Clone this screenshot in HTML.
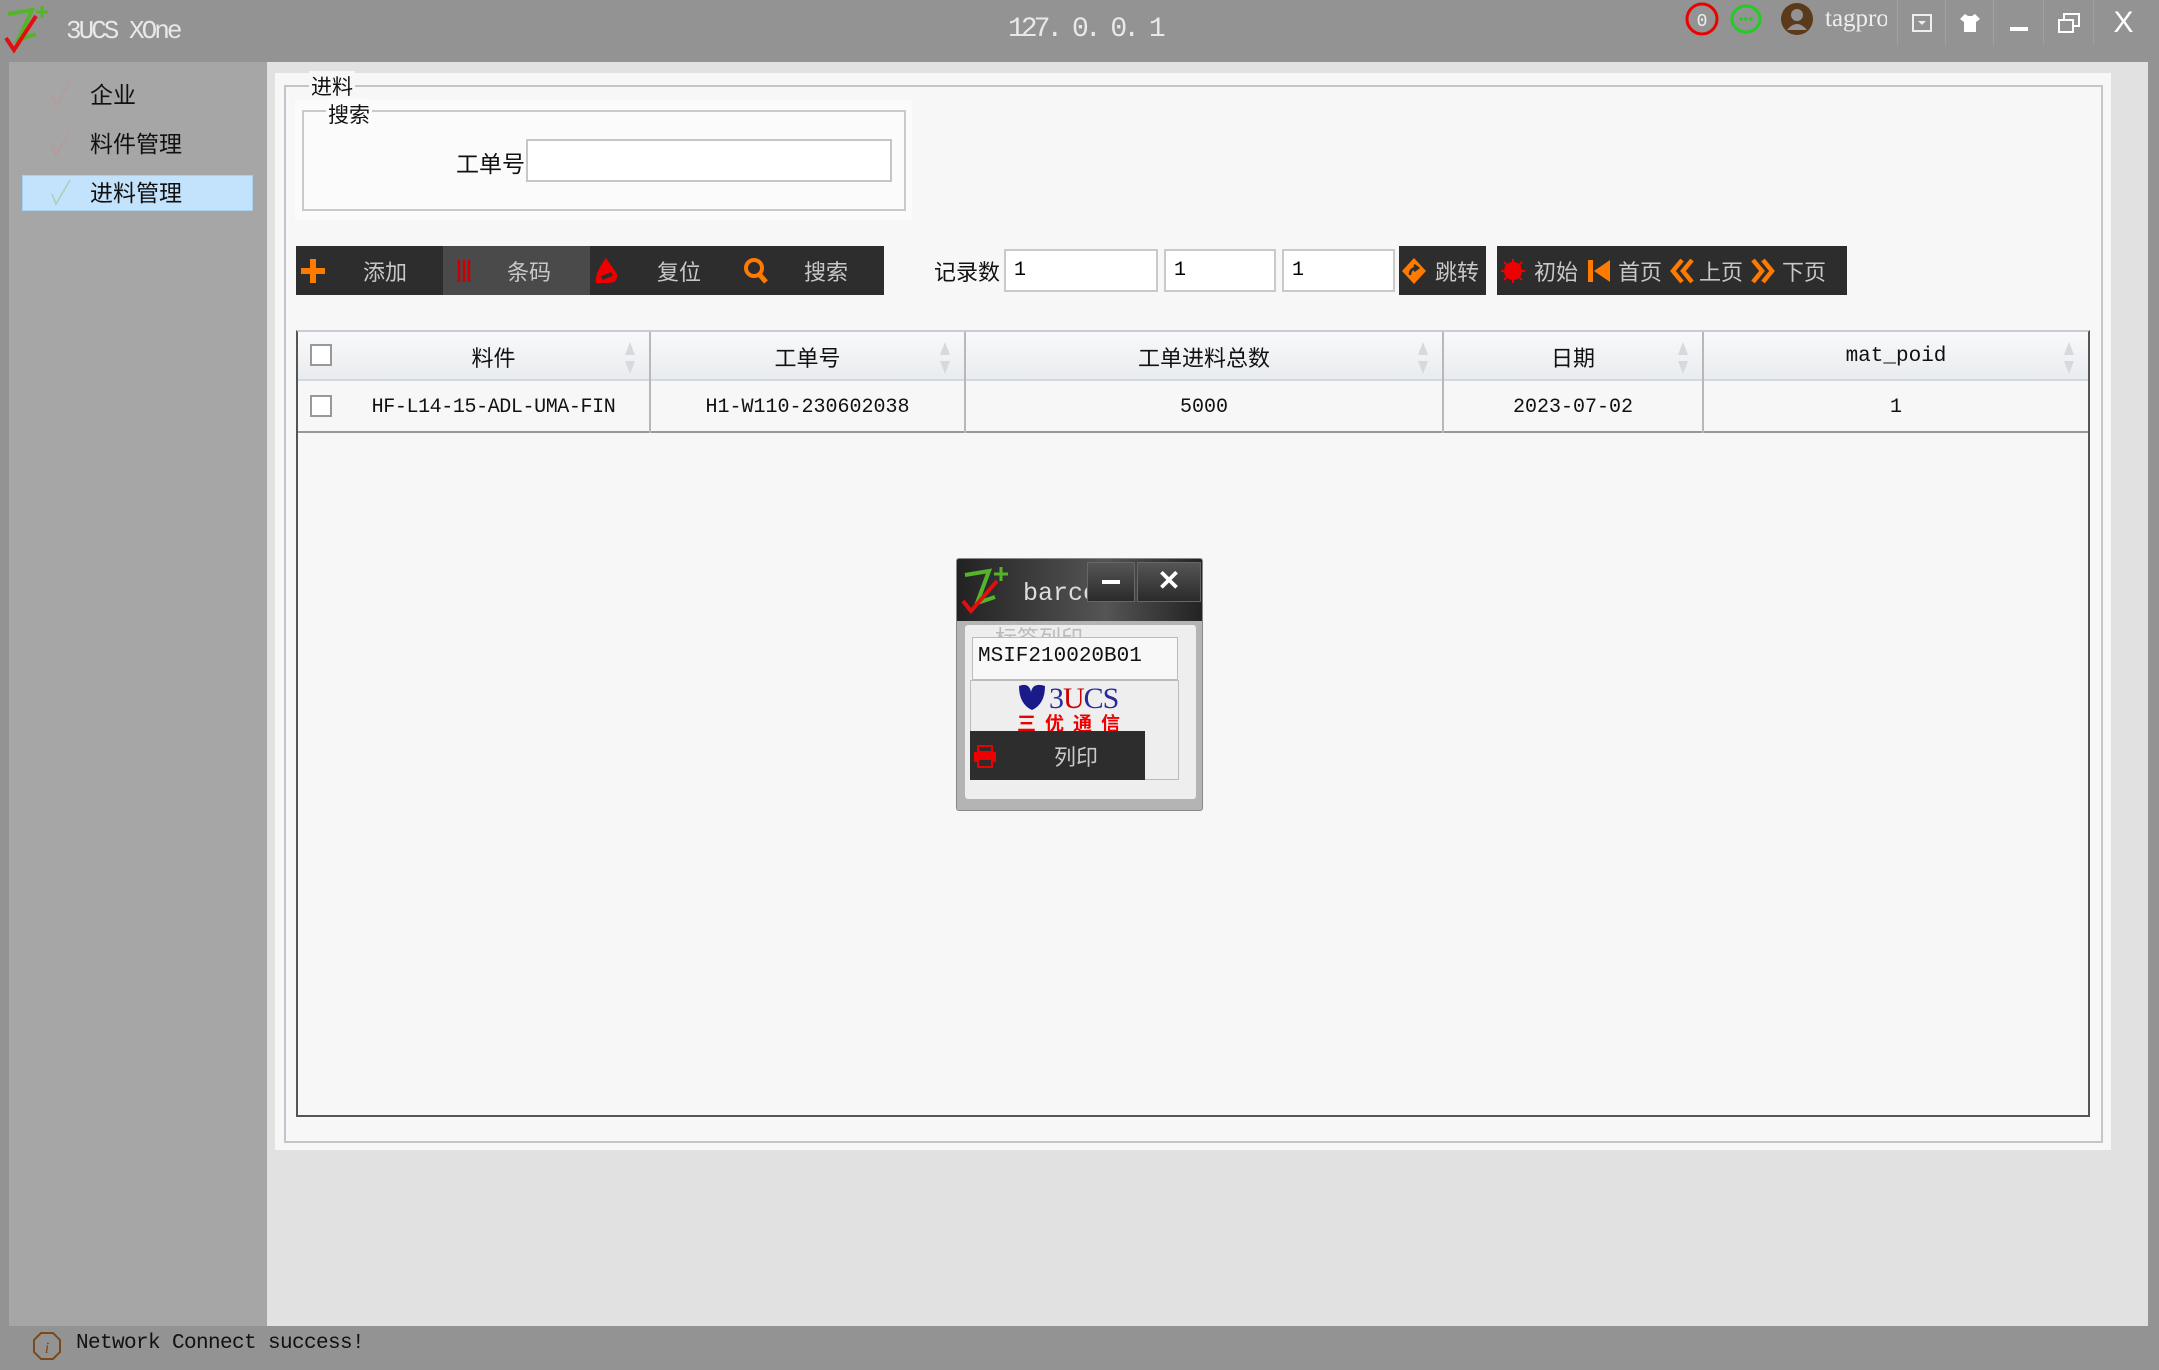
<!DOCTYPE html>
<html><head><meta charset="utf-8"><style>
*{margin:0;padding:0;box-sizing:border-box}
body{width:2159px;height:1370px;overflow:hidden;background:#939393;font-family:"Liberation Sans","Noto Sans CJK SC",sans-serif;position:relative}
.a{position:absolute}
.cn{font-family:"Liberation Sans","Noto Sans CJK SC",sans-serif}
.mono{font-family:"Liberation Mono","Noto Sans CJK SC",monospace}
.tb{background:#2d2d2d;color:#c8c8c8;font-size:22px;display:flex;align-items:center}
.inp{background:#fff;border:2px solid #c9c9c9;font-family:"Liberation Mono",monospace;font-size:20px;padding-left:8px;display:flex;align-items:center}
.th{top:0;height:49px;display:flex;align-items:center;justify-content:center;font-size:22px;color:#111}
.td{top:49px;height:52px;display:flex;align-items:center;justify-content:center;font-size:20px;color:#111}
.vl{width:2px;background:#b8b8b8;top:0;height:101px}
.sort{width:12px;height:36px}
</style></head><body>
<svg class="a" style="left:2px;top:4px" width="52" height="50" viewBox="0 0 52 50"><path d="M6 10 L30 6 L16 36 L34 30" stroke="#55b52a" stroke-width="4" fill="none"/><path d="M4 34 L12 46 L34 12" stroke="#e01010" stroke-width="4" fill="none"/><path d="M40 2v12M34 8h12" stroke="#55b52a" stroke-width="3"/></svg>
<div class="a mono" style="left:66px;top:16px;font-size:26px;color:#e8e8e8;letter-spacing:-3px">3UCS XOne</div>
<div class="a mono" style="left:1008px;top:14px;font-size:28px;color:#e8e8e8;letter-spacing:-4px">127. 0. 0. 1</div>
<svg class="a" style="left:1684px;top:2px" width="36" height="36"><ellipse cx="18" cy="17" rx="15" ry="15" stroke="#e00" stroke-width="3" fill="none"/><text x="18" y="24" font-size="18" fill="#eee" text-anchor="middle" font-family="Liberation Mono">0</text></svg>
<svg class="a" style="left:1728px;top:2px" width="36" height="36"><ellipse cx="18" cy="17" rx="14" ry="13" stroke="#2c2" stroke-width="3" fill="none"/><circle cx="13" cy="17" r="1.8" fill="#2c2"/><circle cx="18" cy="17" r="1.8" fill="#2c2"/><circle cx="23" cy="17" r="1.8" fill="#2c2"/></svg>
<svg class="a" style="left:1780px;top:2px" width="34" height="34"><circle cx="17" cy="17" r="16" fill="#5a3a1a"/><circle cx="17" cy="13" r="6" fill="#939393"/><path d="M7 28 Q17 16 27 28" fill="#939393"/></svg>
<div class="a" style="left:1825px;top:5px;font-family:'Liberation Serif',serif;font-size:25px;color:#eee;width:62px;overflow:hidden;white-space:nowrap">tagpro</div>
<div class="a" style="left:1897px;top:0;width:262px;height:45px;display:flex">
<div style="width:48px;border-left:1px solid #a0a0a0;display:flex;align-items:center;justify-content:center"><svg width="20" height="18"><rect x="1" y="1" width="18" height="16" stroke="#eee" stroke-width="2" fill="none"/><path d="M6 7h8l-4 4z" fill="#eee"/></svg></div>
<div style="width:48px;border-left:1px solid #a0a0a0;display:flex;align-items:center;justify-content:center"><svg width="22" height="20"><path d="M6 1 L1 6 L5 9 L5 19 L17 19 L17 9 L21 6 L16 1 L13 3 L9 3Z" fill="#fff"/></svg></div>
<div style="width:50px;border-left:1px solid #a0a0a0;display:flex;align-items:center;justify-content:center"><div style="width:18px;height:4px;background:#fff;margin-top:12px"></div></div>
<div style="width:50px;border-left:1px solid #a0a0a0;display:flex;align-items:center;justify-content:center"><svg width="22" height="20"><rect x="1" y="7" width="14" height="12" stroke="#fff" stroke-width="2" fill="none"/><path d="M6 6V1h15v12h-5" stroke="#fff" stroke-width="2" fill="none"/></svg></div>
<div style="width:60px;border-left:1px solid #a0a0a0;display:flex;align-items:center;justify-content:center;color:#fff;font-size:30px;font-family:'Liberation Sans'">X</div>
</div>
<div class="a" style="left:9px;top:62px;width:258px;height:1264px;background:#a6a6a6"></div>
<div class="a" style="left:22px;top:175px;width:231px;height:36px;background:#c3e2fb;border:1px solid #a8d0f0"></div>
<div class="a cn" style="left:90px;top:76px;font-size:23px;color:#111">企业</div>
<div class="a cn" style="left:90px;top:125px;font-size:23px;color:#111">料件管理</div>
<div class="a cn" style="left:90px;top:174px;font-size:23px;color:#111">进料管理</div>
<svg class="a" style="left:50px;top:80px" width="22" height="28"><path d="M2 16 L6 26 L20 2" stroke="#c98f8f" stroke-width="1.5" fill="none" opacity=".6"/></svg>
<svg class="a" style="left:50px;top:129px" width="22" height="28"><path d="M2 16 L6 26 L20 2" stroke="#c98f8f" stroke-width="1.5" fill="none" opacity=".6"/></svg>
<svg class="a" style="left:50px;top:178px" width="22" height="28"><path d="M2 16 L6 26 L20 2" stroke="#9ac8a0" stroke-width="1.5" fill="none" opacity=".7"/></svg>
<div class="a" style="left:267px;top:62px;width:1881px;height:1264px;background:#e1e1e1"></div>
<div class="a" style="left:275px;top:73px;width:1836px;height:1077px;background:#f7f7f7"></div>
<div class="a" style="left:284px;top:85px;width:1819px;height:1058px;border:2px solid #c2c6cc"></div>
<div class="a cn" style="left:309px;top:71px;font-size:21px;color:#111;background:#f7f7f7;padding:0 2px">进料</div>
<div class="a" style="left:295px;top:100px;width:617px;height:120px;background:#fbfbfb"></div>
<div class="a" style="left:302px;top:110px;width:604px;height:101px;border:2px solid #c8cacc"></div>
<div class="a cn" style="left:326px;top:99px;font-size:21px;color:#111;background:#fbfbfb;padding:0 2px">搜索</div>
<div class="a cn" style="left:456px;top:145px;font-size:23px;color:#111">工单号</div>
<div class="a" style="left:526px;top:139px;width:366px;height:43px;background:#fff;border:2px solid #c4c6c8"></div>
<div class="a" style="left:296px;top:246px;width:588px;height:49px;display:flex">
<div class="tb" style="width:147px"><svg width="30" height="30" style="margin-left:2px"><path d="M15 3v24M3 15h24" stroke="#ff7a00" stroke-width="6"/></svg><span style="margin-left:35px">添加</span></div>
<div class="tb" style="width:147px;background:#4a4a4a"><svg width="30" height="30" style="margin-left:12px"><path d="M4 4v22M9 4v22M14 4v22" stroke="#c00" stroke-width="2.5"/></svg><span style="margin-left:22px">条码</span></div>
<div class="tb" style="width:147px"><svg width="30" height="30" style="margin-left:2px"><path d="M14 2 L25 18 Q26 27 16 27 L4 27 Q2 18 14 2Z" fill="#e00"/><path d="M10 22 L20 18" stroke="#2d2d2d" stroke-width="4"/></svg><span style="margin-left:35px">复位</span></div>
<div class="tb" style="width:147px"><svg width="30" height="30" style="margin-left:4px"><circle cx="13" cy="12" r="8" stroke="#ff7a00" stroke-width="4" fill="none"/><path d="M18 18 L25 26" stroke="#ff7a00" stroke-width="5"/></svg><span style="margin-left:33px">搜索</span></div>
</div>
<div class="a cn" style="left:934px;top:255px;font-size:22px;color:#111">记录数</div>
<div class="a inp" style="left:1004px;top:249px;width:154px;height:43px">1</div>
<div class="a inp" style="left:1164px;top:249px;width:112px;height:43px">1</div>
<div class="a inp" style="left:1282px;top:249px;width:113px;height:43px">1</div>
<div class="a tb" style="left:1399px;top:246px;width:87px;height:49px"><svg width="28" height="30" style="margin-left:2px"><path d="M13 2 L25 15 L13 28 L1 15Z" fill="#ff7a00"/><path d="M9 19 Q9 12 16 12 M13 9 L17 12 L13 15" stroke="#2d2d2d" stroke-width="2.5" fill="none"/></svg><span style="margin-left:6px">跳转</span></div>
<div class="a tb" style="left:1497px;top:246px;width:350px;height:49px">
<svg width="26" height="26" style="margin-left:3px"><circle cx="13" cy="13" r="9" fill="#e00"/><path d="M13 1v24M1 13h24M4 4l18 18M22 4L4 22" stroke="#e00" stroke-width="2"/></svg><span style="margin-left:8px">初始</span>
<svg width="28" height="28" style="margin-left:8px"><rect x="2" y="3" width="5" height="22" fill="#ff7a00"/><path d="M24 3 L8 14 L24 25Z" fill="#ff7a00"/></svg><span style="margin-left:4px">首页</span>
<svg width="28" height="28" style="margin-left:6px"><path d="M14 3 L5 14 L14 25 M24 3 L15 14 L24 25" stroke="#ff7a00" stroke-width="4.5" fill="none"/></svg><span style="margin-left:3px">上页</span>
<svg width="28" height="28" style="margin-left:6px"><path d="M4 3 L13 14 L4 25 M14 3 L23 14 L14 25" stroke="#ff7a00" stroke-width="4.5" fill="none"/></svg><span style="margin-left:5px">下页</span>
</div>
<div class="a" style="left:296px;top:330px;width:1794px;height:787px;border:2px solid #555;border-top:2px solid #c8ccd0;background:#f7f7f7">
<div class="a" style="left:0;top:0;width:1790px;height:49px;background:linear-gradient(#f8f9fa,#e9ecef);border-bottom:2px solid #d2d8de"></div>
<div class="a" style="left:0;top:49px;width:1790px;height:52px;background:#f7f7f7;border-bottom:2px solid #999"></div>
<div class="a" style="left:12px;top:12px;width:22px;height:22px;border:2px solid #999;background:#fff"></div>
<div class="a" style="left:12px;top:63px;width:22px;height:22px;border:2px solid #999;background:#fff"></div>
<div class="a vl" style="left:351px"></div><div class="a vl" style="left:666px"></div><div class="a vl" style="left:1144px"></div><div class="a vl" style="left:1404px"></div>
<div class="a th cn" style="left:40px;width:311px">料件</div>
<div class="a th cn" style="left:353px;width:313px">工单号</div>
<div class="a th cn" style="left:668px;width:476px">工单进料总数</div>
<div class="a th cn" style="left:1146px;width:258px">日期</div>
<div class="a th mono" style="left:1406px;width:384px;font-size:21px">mat_poid</div>
<div class="a td mono" style="left:40px;width:311px;letter-spacing:-0.4px">HF-L14-15-ADL-UMA-FIN</div>
<div class="a td mono" style="left:353px;width:313px">H1-W110-230602038</div>
<div class="a td mono" style="left:668px;width:476px">5000</div>
<div class="a td mono" style="left:1146px;width:258px">2023-07-02</div>
<div class="a td mono" style="left:1406px;width:384px">1</div>
<svg class="a sort" style="left:326px;top:8px"><path d="M6 2 L11 15 H1Z M6 34 L11 21 H1Z" fill="#d6dadf"/></svg>
<svg class="a sort" style="left:641px;top:8px"><path d="M6 2 L11 15 H1Z M6 34 L11 21 H1Z" fill="#d6dadf"/></svg>
<svg class="a sort" style="left:1119px;top:8px"><path d="M6 2 L11 15 H1Z M6 34 L11 21 H1Z" fill="#d6dadf"/></svg>
<svg class="a sort" style="left:1379px;top:8px"><path d="M6 2 L11 15 H1Z M6 34 L11 21 H1Z" fill="#d6dadf"/></svg>
<svg class="a sort" style="left:1765px;top:8px"><path d="M6 2 L11 15 H1Z M6 34 L11 21 H1Z" fill="#d6dadf"/></svg>
</div>
<div class="a" style="left:956px;top:558px;width:247px;height:253px;background:#b4b4b4;border:1px solid #888;border-radius:3px;overflow:hidden">
<div class="a" style="left:0;top:0;width:247px;height:62px;background:linear-gradient(90deg,#222 0%,#555 60%,#222 100%)"></div>
<svg class="a" style="left:2px;top:4px" width="50" height="52"><path d="M6 12 L30 8 L18 40 L36 34" stroke="#55b52a" stroke-width="4" fill="none"/><path d="M4 38 L12 48 L38 18" stroke="#e01010" stroke-width="4" fill="none"/><path d="M42 4v14M35 11h14" stroke="#55b52a" stroke-width="3"/></svg>
<div class="a mono" style="left:66px;top:20px;font-size:25px;color:#ddd;width:64px;overflow:hidden;white-space:nowrap">barcode</div>
<div class="a" style="left:130px;top:3px;width:48px;height:40px;background:linear-gradient(#555,#2a2a2a);border:1px solid #666"><div style="width:18px;height:4px;background:#fff;margin:17px auto 0"></div></div>
<div class="a" style="left:180px;top:3px;width:64px;height:40px;background:linear-gradient(#555,#2a2a2a);border:1px solid #666;color:#fff;font-size:28px;text-align:center;line-height:36px;font-weight:bold">✕</div>
<div class="a" style="left:8px;top:66px;width:231px;height:174px;background:#eee;border-radius:3px"></div>
<div class="a cn" style="left:38px;top:62px;font-size:22px;color:#bbb;height:18px;overflow:hidden">标签列印</div>
<div class="a" style="left:15px;top:78px;width:206px;height:43px;background:#f8f8f8;border:1px solid #bbb"></div>
<div class="a mono" style="left:21px;top:86px;font-size:21px;color:#111">MSIF210020B01</div>
<div class="a" style="left:13px;top:121px;width:209px;height:100px;border:1px solid #bbb;background:#eee"></div>
<svg class="a" style="left:60px;top:123px" width="140" height="50"><path d="M2 4 Q12 0 14 10 Q16 0 28 4 Q28 22 15 28 Q2 22 2 4Z" fill="#1a1a8a"/><text x="32" y="26" font-family="Liberation Serif" font-size="30" fill="#2a2a9a" letter-spacing="-1">3<tspan fill="#c00">U</tspan>CS</text><text x="0" y="48" font-family="Noto Sans CJK SC" font-size="19" fill="#e00" font-weight="bold" letter-spacing="9">三优通信</text></svg>
<div class="a tb" style="left:13px;top:172px;width:175px;height:49px"><svg width="26" height="26" style="margin-left:2px"><rect x="2" y="9" width="22" height="10" fill="#e00"/><rect x="6" y="3" width="14" height="6" fill="none" stroke="#e00" stroke-width="2"/><rect x="6" y="16" width="14" height="8" fill="#2d2d2d" stroke="#e00" stroke-width="2"/></svg><span style="margin-left:56px">列印</span></div>
</div>
<div class="a" style="left:0;top:1326px;width:2159px;height:44px;background:#939393"></div>
<svg class="a" style="left:32px;top:1331px" width="30" height="30"><path d="M9 2h12l7 7v12l-7 7H9l-7-7V9z" stroke="#7a4a1a" stroke-width="2" fill="none"/><text x="15" y="22" font-size="16" font-style="italic" fill="#7a4a1a" text-anchor="middle" font-family="Liberation Serif">i</text></svg>
<div class="a mono" style="left:76px;top:1332px;font-size:21px;color:#111;letter-spacing:-0.6px">Network Connect success!</div>
</body></html>
